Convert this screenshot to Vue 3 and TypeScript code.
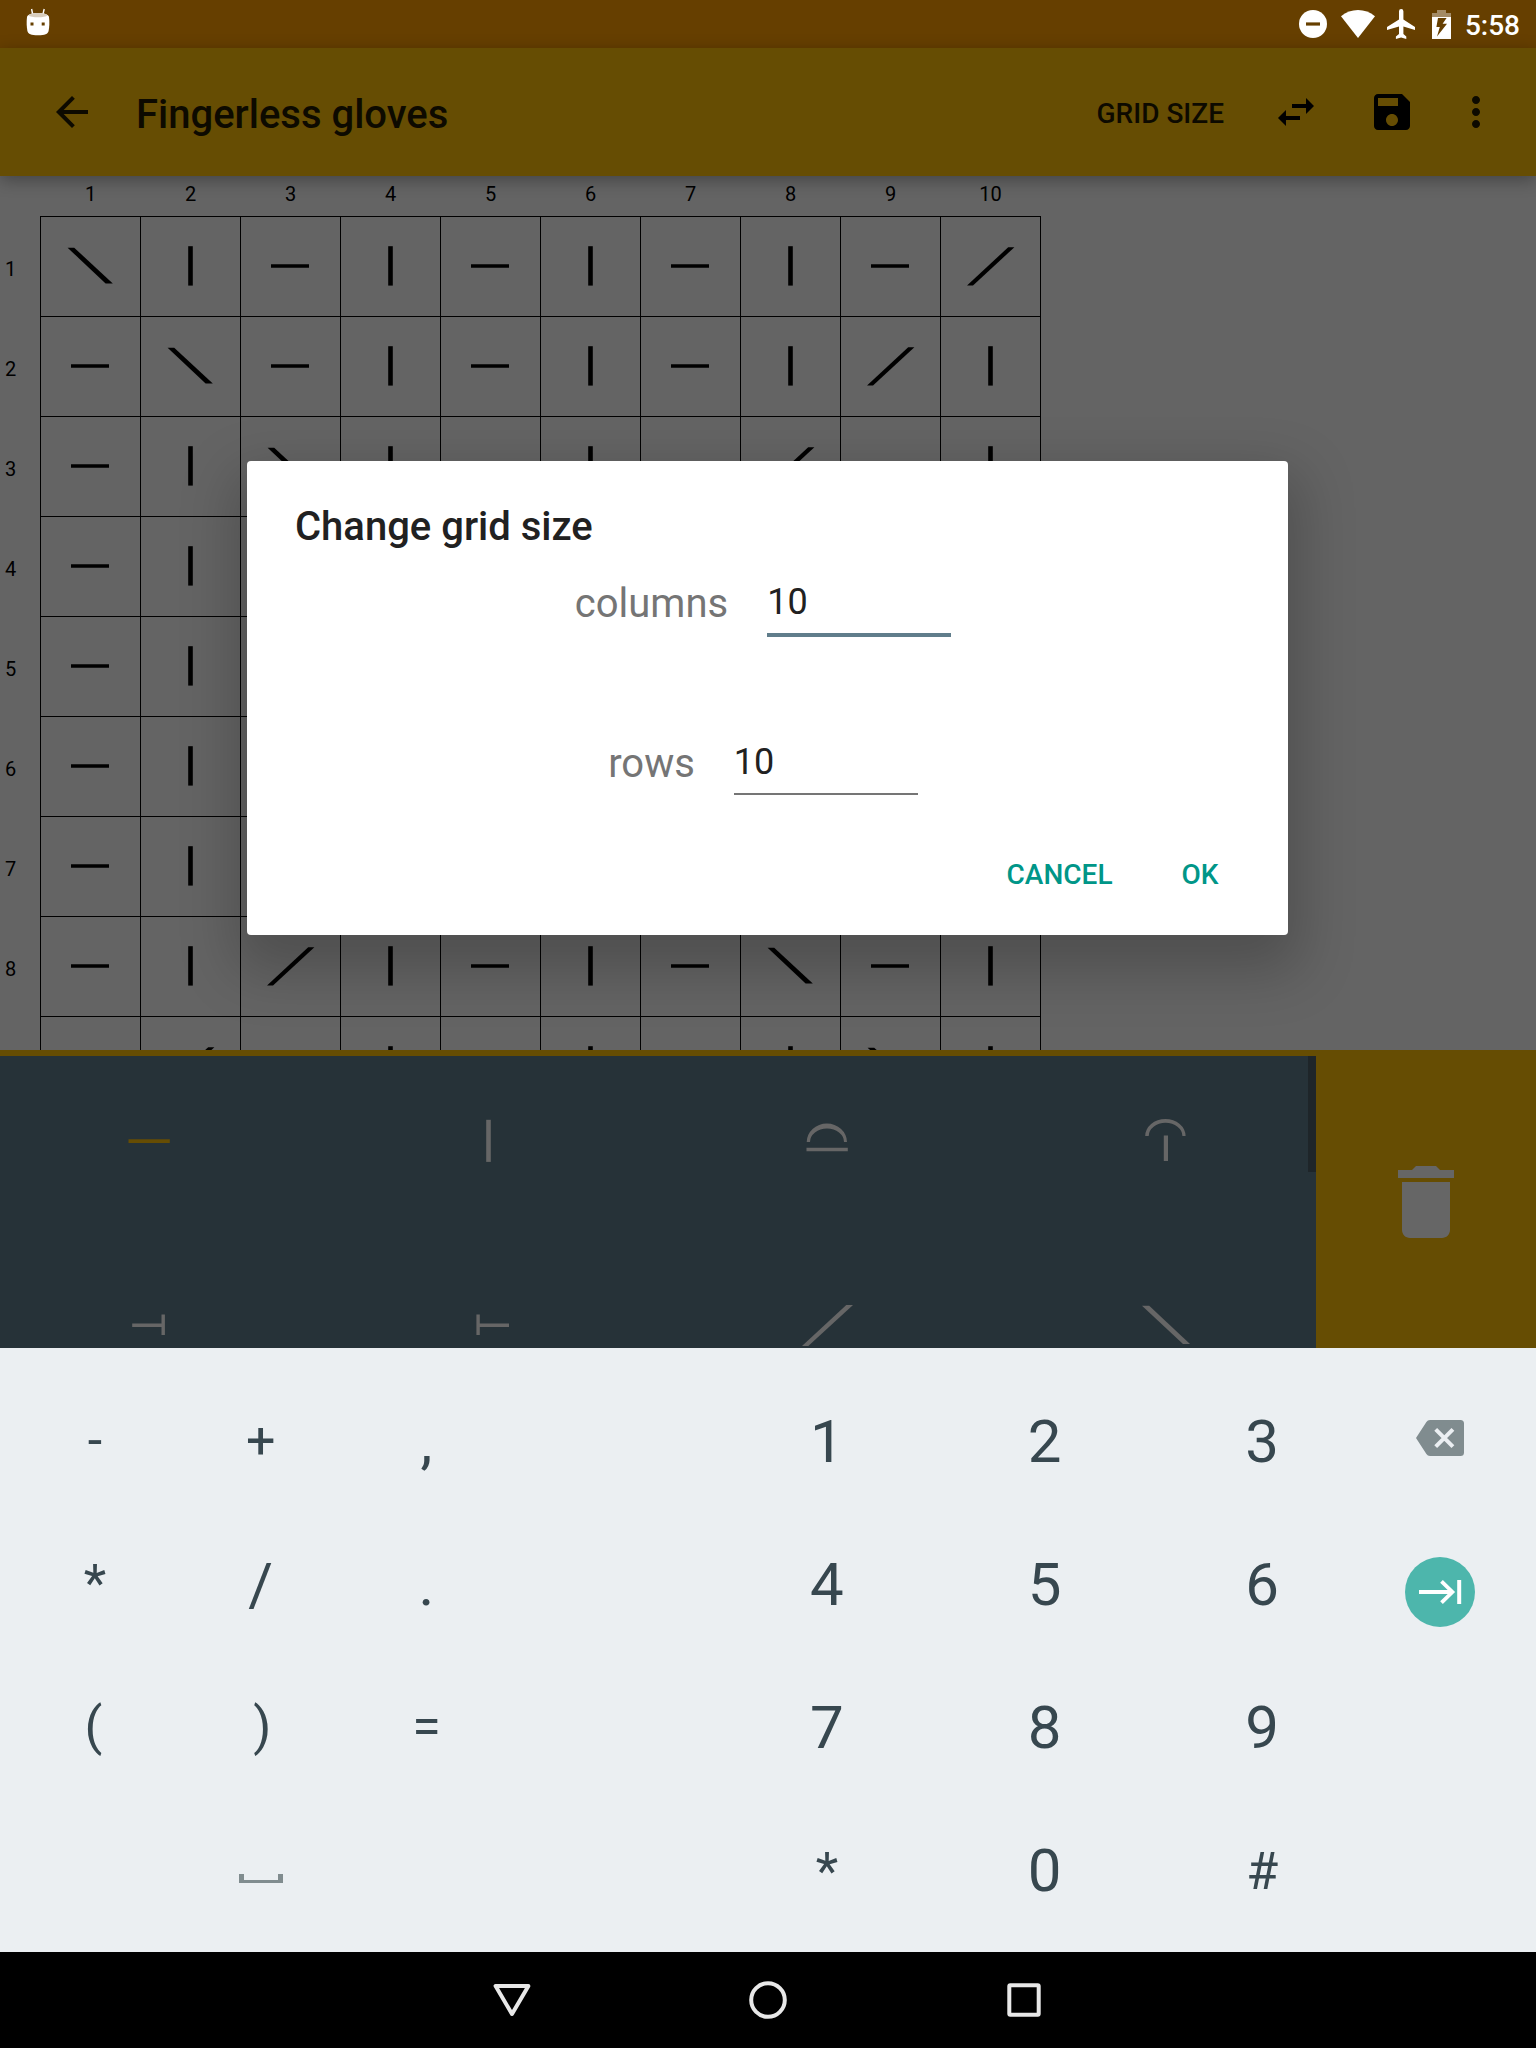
<script setup lang="ts">
type Stitch = 'knit' | 'purl' | 'left' | 'right'

interface Key {
  label: string
  kind?: string
}

const size = 10
const columns = Array.from({ length: size }, (_, i) => i + 1)

// Decreases run along both diagonals on a ribbed background; they lean
// towards the centre in the top half and mirror in the bottom half.
function stitchAt(row: number, col: number): Stitch {
  if (row === col) return 'left'
  if (col === size + 1 - row) return 'right'
  return col % 2 === 0 ? 'knit' : 'purl'
}

const rows = Array.from({ length: 9 }, (_, r) => ({
  id: r + 1,
  label: r < 8 ? String(r + 1) : '',
  cells: columns.map((col) => stitchAt(r + 1, col)),
}))

const shapes: Record<Stitch, string> = {
  purl: 'M31 48.2H69V51.8H31Z',
  knit: 'M48.2 30.2H52.8V69.6H48.2Z',
  left: 'M27.6 31.7H34.2L72.8 67.5H65.6Z',
  right: 'M27 69.6H33L74.4 31.2H68.2Z',
}

const palette: { path: string; active?: boolean }[] = [
  { path: 'M128.5 83.2H169.8V87.1H128.5Z', active: true },
  { path: 'M147.2 63.8H151.8V105.9H147.2Z' },
  { path: 'M128.7 86A20.15 18.4 0 0 1 169 86H166A17 13.4 0 0 0 132 86ZM128.5 91.7H169.8V95.3H128.5Z' },
  { path: 'M128.2 80A20.2 17 0 0 1 168.6 80H165.4A16.85 13.2 0 0 0 131.7 80ZM146.8 79.5H151V105H146.8Z' },
  { path: 'M132.2 83.5H161.5V74.5H164.9V95H161.5V86.9H132.2Z' },
  { path: 'M137.4 74.5H140.8V83.5H170V86.9H140.8V95H137.4Z' },
  { path: 'M124 105.9H130.3L175 65.1H168.3Z' },
  { path: 'M125 65.8H132.2L173 103.9H166Z' },
]

const symbolKeys: Key[] = [
  { label: '-', kind: 'small' }, { label: '+', kind: 'small' }, { label: ',' },
  { label: '*', kind: 'small' }, { label: '/' }, { label: '.' },
  { label: '(', kind: 'small open' }, { label: ')', kind: 'small close' }, { label: '=', kind: 'small' },
]

const digitKeys: Key[] = [
  { label: '1' }, { label: '2' }, { label: '3' },
  { label: '4' }, { label: '5' }, { label: '6' },
  { label: '7' }, { label: '8' }, { label: '9' },
  { label: '*', kind: 'small' }, { label: '0' }, { label: '#', kind: 'small' },
]
</script>

<template>
  <div class="screen">
    <header class="status">
      <svg class="droid" width="24" height="28" viewBox="0 0 24 28">
        <path d="M5.6 1L6.6 6M18.2 1L17 6" stroke="#fff" stroke-width="1.4" />
        <path d="M1 9C2 3.6 22 3.6 23 9C23.6 14 23.4 19 22.6 23C21.8 26 19 27.2 12 27.2S2.2 26 1.4 23C.6 19 .4 14 1 9Z" fill="#fff" />
        <path d="M2.6 7.2C5 4.3 19 4.3 21.4 7.2C19.5 10 4.5 10 2.6 7.2Z" fill="#d8cdbd" />
        <path d="M4.5 14.6h3v3h-3zM15.7 14.6h3v3h-3z" fill="#663f00" />
      </svg>
      <div class="status-right">
        <svg width="28" height="28" viewBox="0 0 28 28"><circle cx="14" cy="14" r="14" fill="#fff" /><path d="M7 12.4H21V15.6H7Z" fill="#663f00" /></svg>
        <svg class="wifi" width="34" height="28" viewBox="0 0 34 28"><path d="M0 6.2C9.6-2 24.4-2 34 6.2L17 28Z" fill="#fff" /></svg>
        <svg class="plane" width="28" height="30" viewBox="0 0 28 30"><path d="M28 21V18L16.4 10.6V2.2A2.2 2.2 0 0 0 12 2.2V10.6L0 18V21L12 17.4V25L8.9 27.4V30L14.1 28.5L19.3 30V27.4L16.4 25V17.4Z" fill="#fff" /></svg>
        <svg class="battery" width="19" height="29" viewBox="0 0 19 29">
          <path d="M5 0H14V3H19V7H0V3H5Z" fill="#a38b66" />
          <path fill-rule="evenodd" d="M0 7H19V29H0ZM6 8L4.4 17H7.8L5 26.5L15 13.8H10.6L14.6 8Z" fill="#fff" />
        </svg>
        <span class="time">5:58</span>
      </div>
    </header>

    <nav class="appbar">
      <svg class="back" width="48" height="48" viewBox="0 0 24 24"><path d="M20 11H7.83l5.59-5.59L12 4l-8 8 8 8 1.41-1.41L7.83 13H20v-2z" fill="#0d0a00" /></svg>
      <h1>Fingerless gloves</h1>
      <span class="action">GRID SIZE</span>
      <svg class="swap" width="48" height="48" viewBox="0 0 24 24"><path d="M6.99 11L3 15l3.99 4v-3H14v-2H6.99v-3zM21 9l-3.99-4v3H10v2h7.01v3L21 9z" /></svg>
      <svg class="save" width="48" height="48" viewBox="0 0 24 24"><path d="M17 3H5c-1.11 0-2 .9-2 2v14c0 1.1.89 2 2 2h14c1.1 0 2-.9 2-2V7l-4-4zm-5 16c-1.66 0-3-1.34-3-3s1.34-3 3-3 3 1.34 3 3-1.34 3-3 3zm3-10H5V5h10v4z" /></svg>
      <svg class="more" width="48" height="48" viewBox="0 0 24 24"><path d="M12 8c1.1 0 2-.9 2-2s-.9-2-2-2-2 .9-2 2 .9 2 2 2zm0 2c-1.1 0-2 .9-2 2s.9 2 2 2 2-.9 2-2-.9-2-2-2zm0 6c-1.1 0-2 .9-2 2s.9 2 2 2 2-.9 2-2-.9-2-2-2z" fill="#0d0a00" /></svg>
    </nav>

    <main class="chart">
      <div class="col-labels">
        <span v-for="c in columns" :key="c">{{ c }}</span>
      </div>
      <div v-for="row in rows" :key="row.id" class="row">
        <span class="row-label">{{ row.label }}</span>
        <svg v-for="(cell, i) in row.cells" :key="i" class="cell" width="100" height="100" viewBox="0 0 100 100">
          <path d="M0 .5H100M.5 0V100" stroke="#000" stroke-width="1" />
          <path :d="shapes[cell]" />
        </svg>
        <span class="edge"></span>
      </div>
    </main>

    <section class="tools">
      <div class="palette">
        <svg v-for="(item, i) in palette" :key="i" width="299" height="170" viewBox="0 0 299 170">
          <path :d="item.path" :fill="item.active ? '#664d03' : '#666666'" />
        </svg>
        <span class="scrollbar"></span>
      </div>
      <div class="trash">
        <svg width="96" height="96" viewBox="0 0 24 24"><path d="M6 19c0 1.1.9 2 2 2h8c1.1 0 2-.9 2-2V7H6v12zM19 4h-3.5l-1-1h-5l-1 1H5v2h14V4z" fill="#666" /></svg>
      </div>
    </section>

    <section class="keyboard">
      <div class="symbols">
        <span v-for="(k, i) in symbolKeys" :key="i" :class="k.kind">{{ k.label }}</span>
        <span></span>
        <span class="space"><svg width="44" height="9" viewBox="0 0 44 9"><path d="M0 0H5V6H39V0H44V9H0Z" fill="#808c8f" /></svg></span>
      </div>
      <div class="digits">
        <span v-for="(k, i) in digitKeys" :key="i" :class="k.kind">{{ k.label }}</span>
      </div>
      <div class="controls">
        <span class="del">
          <svg width="48" height="36" viewBox="0 0 48 36">
            <path d="M0 18L10.4 2Q11.6 0 14 0H44.5Q48 0 48 3.5V32.5Q48 36 44.5 36H14Q11.6 36 10.4 34Z" fill="#808c8f" />
            <path d="M19.7 9.4L36.9 26.6M36.9 9.4L19.7 26.6" stroke="#ebeff2" stroke-width="4" />
          </svg>
        </span>
        <span class="enter">
          <svg width="70" height="70" viewBox="0 0 70 70">
            <circle cx="35" cy="35" r="35" fill="#4db6ac" />
            <path d="M14 35H47M36.5 24.3L47.4 35L36.5 45.7" fill="none" stroke="#fff" stroke-width="3.8" />
            <path d="M52.2 23H56.2V47H52.2Z" fill="#fff" />
          </svg>
        </span>
      </div>
    </section>

    <footer class="navbar">
      <svg width="48" height="48" viewBox="0 0 48 48"><path d="M7.6 10H40.4L24 38Z" fill="none" stroke="#e8e8e8" stroke-width="4" stroke-linejoin="round" /></svg>
      <svg width="48" height="48" viewBox="0 0 48 48"><circle cx="24" cy="24" r="16.8" fill="none" stroke="#e8e8e8" stroke-width="4" /></svg>
      <svg width="48" height="48" viewBox="0 0 48 48"><rect x="9.3" y="9.3" width="29.4" height="29.4" rx="1" fill="none" stroke="#e8e8e8" stroke-width="4" /></svg>
    </footer>

    <div class="dialog">
      <h2>Change grid size</h2>
      <label class="field focused"><span>columns</span><b>10</b></label>
      <label class="field"><span>rows</span><b>10</b></label>
      <div class="buttons"><span>CANCEL</span><span>OK</span></div>
    </div>
  </div>
</template>

<style>
body {
  background: #000;
}
</style>

<style scoped>
.screen {
  position: relative;
  width: 1536px;
  height: 2048px;
  overflow: hidden;
  display: flex;
  flex-direction: column;
  background: #646464;
  font-family: Roboto, sans-serif;
  color: #000;
}
svg {
  display: block;
  flex: none;
}
.status {
  height: 48px;
  flex: none;
  display: flex;
  align-items: center;
  justify-content: space-between;
  background: #663f00;
  padding: 0 16px 0 26px;
}
.droid {
  margin-bottom: 4px;
}
.status-right {
  display: flex;
  align-items: center;
}
.wifi {
  margin-left: 14px;
}
.plane {
  margin-left: 12px;
}
.battery {
  margin-left: 17px;
}
.time {
  margin-left: 14px;
  padding-top: 4px;
  font-size: 28px;
  font-weight: 500;
  line-height: 34px;
  color: #fff;
}
.appbar {
  position: relative;
  z-index: 1;
  height: 128px;
  flex: none;
  display: flex;
  align-items: center;
  padding: 0 36px 0 48px;
  background: #664d03;
  box-shadow: 0 4px 16px rgba(0, 0, 0, 0.32);
}
.appbar h1 {
  margin: 0 auto 0 40px;
  padding-top: 6px;
  font-size: 40px;
  font-weight: 500;
  line-height: 48px;
  color: #0d0a00;
}
.action {
  padding-top: 4px;
  font-size: 28px;
  font-weight: 500;
  line-height: 34px;
  color: #0d0a00;
}
.swap {
  margin-left: 48px;
}
.save {
  margin-left: 48px;
}
.more {
  margin-left: 36px;
}
.chart {
  height: 874px;
  flex: none;
  overflow: hidden;
}
.col-labels {
  display: flex;
  height: 40px;
  padding-left: 40.6px;
}
.col-labels span {
  width: 100px;
  text-align: center;
  font-size: 20px;
  line-height: 36px;
}
.row {
  display: flex;
  height: 100px;
}
.row-label {
  width: 35px;
  padding: 6px 0 0 5px;
  font-size: 20px;
  line-height: 94px;
}
.edge {
  width: 1px;
  background: #000;
}
.tools {
  height: 298px;
  flex: none;
  box-sizing: border-box;
  border-top: 6px solid #664d03;
  display: flex;
}
.palette {
  position: relative;
  width: 1316px;
  overflow: hidden;
  display: grid;
  grid-template-columns: repeat(4, 299px);
  grid-auto-rows: 170px;
  gap: 14px 40px;
  background: #263238;
}
.scrollbar {
  position: absolute;
  top: 0;
  right: 0;
  width: 8px;
  height: 116px;
  background: #1e2529;
}
.trash {
  flex: 1;
  display: flex;
  align-items: center;
  justify-content: center;
  background: #664d03;
}
.keyboard {
  height: 604px;
  flex: none;
  box-sizing: border-box;
  display: flex;
  padding: 22px 12px 0;
  background: #ebeff2;
  color: #37474f;
}
.symbols,
.digits {
  display: grid;
  grid-auto-rows: 143px;
  font-size: 60px;
}
.symbols {
  grid-template-columns: repeat(3, 165.8px);
  margin-right: 208.6px;
}
.digits {
  grid-template-columns: repeat(3, 217.7px);
}
.symbols span,
.digits span {
  display: flex;
  align-items: center;
  justify-content: center;
}
.symbols .small,
.digits .small {
  font-size: 52px;
}
.symbols .small {
  padding-bottom: 2px;
}
.digits .small {
  padding-top: 1px;
}
.symbols .open {
  padding-right: 3px;
}
.symbols .close {
  padding-left: 3px;
}
.symbols .space {
  padding-top: 16px;
}
.controls {
  width: 138px;
  display: grid;
  grid-auto-rows: 143px;
}
.controls span {
  display: flex;
  align-items: center;
  justify-content: center;
}
.del {
  padding-bottom: 7px;
}
.enter {
  padding-top: 15px;
}
.navbar {
  flex: 1;
  display: flex;
  align-items: center;
  justify-content: center;
  gap: 208px;
  background: #000;
}
.dialog {
  position: absolute;
  z-index: 2;
  left: 247px;
  top: 461px;
  width: 1041px;
  height: 474px;
  box-sizing: border-box;
  padding: 41px 48px 0;
  border-radius: 4px;
  background: #fff;
  box-shadow: 0 24px 56px 12px rgba(0, 0, 0, 0.21);
}
.dialog h2 {
  margin: 0 0 27px;
  font-size: 40px;
  font-weight: 500;
  line-height: 50px;
  color: #212121;
}
.field {
  display: flex;
  justify-content: center;
  height: 160px;
  padding-right: 9px;
}
.field span {
  margin-right: 39px;
  font-size: 40px;
  line-height: 50px;
  color: #757575;
}
.field b {
  width: 184px;
  height: 54px;
  font-size: 36px;
  font-weight: 400;
  line-height: 47px;
  color: #212121;
  border-bottom: 2px solid #757575;
}
.field.focused b {
  border-bottom: 4px solid #607d8b;
}
.buttons {
  display: flex;
  justify-content: flex-end;
  gap: 69px;
  margin-top: -41px;
  padding-right: 21.5px;
  font-size: 28px;
  font-weight: 500;
  line-height: 34px;
  color: #009688;
}
</style>
